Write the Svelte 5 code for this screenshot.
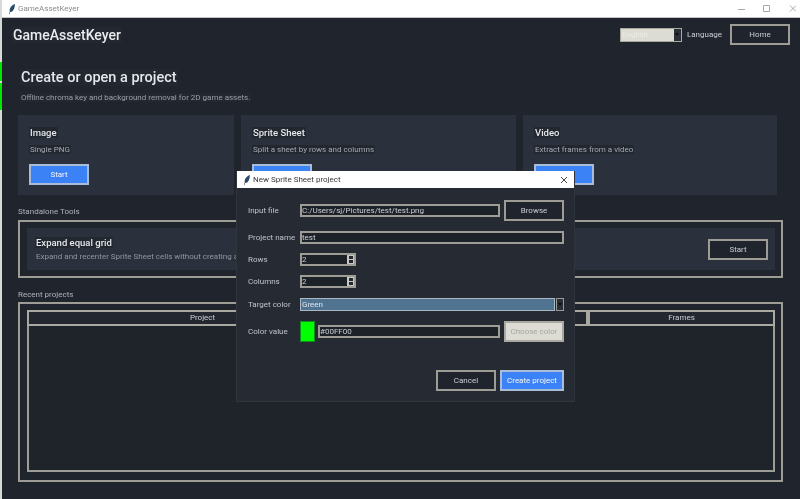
<script>
  const cards = [
    { title: 'Image', text: 'Single PNG' },
    { title: 'Sprite Sheet', text: 'Split a sheet by rows and columns' },
    { title: 'Video', text: 'Extract frames from a video' }
  ];
</script>

<div class="screen">
  <div class="strip">
    <div class="green"></div>
    <div class="green two"></div>
  </div>
  <div class="window">
    <div class="titlebar">
      <svg class="feather" viewBox="0 0 10 14" width="8" height="12"><path d="M8.8.6C5.6 1.4 2.9 4 2.2 7.4c-.2 1-.2 2 0 2.9L1 13.2l.7.3 1.1-2.6c2.6-.3 4.6-2.8 5.2-5.6.3-1.6.6-3.3.8-4.7z" fill="#2b4a6b"/></svg>
      <span class="wintitle">GameAssetKeyer</span>
      <div class="controls">
        <svg viewBox="0 0 58 10" width="58" height="10" fill="none" stroke="#a8a8a8" stroke-width="1">
          <path d="M0 5.5h7M25.5 1.5h6v6h-6zM52 1.5l6 6M58 1.5l-6 6"/>
        </svg>
      </div>
    </div>

    <div class="topbar">
      <span class="brand"><span>GameAssetKeyer</span></span>
      <div class="combo"><span class="combotext">English</span><span class="arrow"><i></i></span></div>
      <span class="lang">Language</span>
      <button class="btn home">Home</button>
    </div>

    <div class="content">
      <div class="h1"><span>Create or open a project</span></div>
      <div class="sub"><span>Offline chroma key and background removal for 2D game assets.</span></div>

      <div class="cards">
        {#each cards as c}
          <div class="card">
            <div class="ctitle"><span>{c.title}</span></div>
            <div class="ctext"><span>{c.text}</span></div>
            <button class="btn primary">Start</button>
          </div>
        {/each}
      </div>

      <div class="section">Standalone Tools</div>
      <div class="frame tools">
        <div class="tool">
          <div class="toolinfo">
            <div class="ttitle"><span>Expand equal grid</span></div>
            <div class="ttext">Expand and recenter Sprite Sheet cells without creating a c</div>
          </div>
          <button class="btn">Start</button>
        </div>
      </div>

      <div class="section recent">Recent projects</div>
      <div class="frame projects">
        <div class="table">
          <div class="thead">
            <div class="th c1">Project</div>
            <div class="th c2"></div>
            <div class="th c3">Frames</div>
          </div>
        </div>
      </div>
    </div>
  </div>

  <div class="dialog">
    <div class="dtitle">
      <svg class="feather" viewBox="0 0 10 14" width="8" height="12"><path d="M8.8.6C5.6 1.4 2.9 4 2.2 7.4c-.2 1-.2 2 0 2.9L1 13.2l.7.3 1.1-2.6c2.6-.3 4.6-2.8 5.2-5.6.3-1.6.6-3.3.8-4.7z" fill="#2b4a6b"/></svg>
      <span class="dname">New Sprite Sheet project</span>
      <svg class="dclose" viewBox="0 0 8 8" width="8" height="8" fill="none" stroke="#444" stroke-width="1"><path d="M1 1l6 6M7 1l-6 6"/></svg>
    </div>
    <div class="dbody">
      <div class="row r-file">
        <span class="lbl">Input file</span>
        <div class="entry grow">C:/Users/sj/Pictures/test/test.png</div>
        <button class="btn">Browse</button>
      </div>
      <div class="row r-name">
        <span class="lbl">Project name</span>
        <div class="entry grow">test</div>
      </div>
      <div class="row r-rows">
        <span class="lbl">Rows</span>
        <div class="entry spin">2<span class="spinbtn"><i class="up"></i><i class="down"></i></span></div>
      </div>
      <div class="row r-cols">
        <span class="lbl">Columns</span>
        <div class="entry spin">2<span class="spinbtn"><i class="up"></i><i class="down"></i></span></div>
      </div>
      <div class="row r-target">
        <span class="lbl">Target color</span>
        <div class="select"><div class="seltext">Green</div><span class="arrow"><i></i></span></div>
      </div>
      <div class="row r-value">
        <span class="lbl">Color value</span>
        <div class="swatch"></div>
        <div class="entry grow">#00FF00</div>
        <button class="btn disabled">Choose color</button>
      </div>
      <div class="actions">
        <button class="btn">Cancel</button>
        <button class="btn primary wide">Create project</button>
      </div>
    </div>
  </div>
</div>

<style>
  :global(body) { margin: 0; background: #20242c; }
  .screen {
    position: relative;
    display: flex;
    width: 800px;
    height: 499px;
    overflow: hidden;
    font-family: Roboto, "Noto Sans", sans-serif;
    font-size: 8px;
    color: #c9cdd4;
    white-space: nowrap;
    filter: blur(0.4px);
  }
  .strip { width: 2px; background: #d8d8d8; padding-top: 62px; flex: none; }
  .green { height: 19px; background: #00e800; }
  .green.two { height: 27px; margin-top: 2px; }
  .window { flex: 1; display: flex; flex-direction: column; background: #20242c; min-width: 0; }

  .titlebar {
    height: 17px;
    flex: none;
    background: #fff;
    border-bottom: 1px solid #c4c4c4;
    display: flex;
    align-items: center;
    padding-left: 6px;
    gap: 2px;
  }
  .wintitle { color: #8c8c8c; font-size: 8px; }
  .controls { margin-left: auto; margin-right: 4px; display: flex; }

  .topbar {
    height: 27px;
    padding: 3px 10px 0 10px;
    display: flex;
    align-items: center;
  }
  .brand { font-size: 14px; font-weight: 500; color: #e9ebef; margin-right: auto; }
  .brand span { background: #23272f; padding: 0 1px; }
  .combo {
    width: 62px;
    height: 14px;
    box-sizing: border-box;
    background: #dcdbd4;
    border: 1px solid #a9a89f;
    display: flex;
    justify-content: space-between;
  }
  .combotext { color: #ecebe6; font-size: 8px; line-height: 11px; padding-left: 1px; }
  .arrow {
    width: 7px;
    background: #2a2e36;
    display: flex;
    align-items: center;
    justify-content: center;
    flex: none;
  }
  .arrow i { border: 2.5px solid transparent; border-top: 3px solid #0c0c0c; border-bottom: 0; }
  .lang { margin: 0 8px 0 5px; color: #c9cdd4; font-size: 8px; }

  .btn {
    width: 60px;
    height: 21px;
    box-sizing: border-box;
    background: #20242c;
    color: #c9cdd4;
    border: 2px solid #9d9d96;
    font: inherit;
    padding: 0;
    flex: none;
  }
  .btn.primary { background: #3b82f6; color: #f3f6fb; border-color: #a8bcd8; }
  .btn.wide { width: 64px; }
  .btn.disabled { background: #dcdbd4; color: #a8a8a2; border-color: #a9a9a2; }

  .content { padding: 0 17px 0 16px; display: flex; flex-direction: column; flex: 1; min-height: 0; }
  .h1 { margin: 20px 0 0 2px; font-size: 14.5px; line-height: 20px; font-weight: 500; color: #e4e7ec; }
  .sub { margin: 3px 0 0 2px; font-size: 8px; line-height: 13px; color: #98a0ab; }
  .sub span, .h1 span, .ctitle span, .ctext span, .ttitle span { background: #23272f; padding: 0 1px; }

  .cards { display: flex; gap: 7px; margin-top: 11px; padding-right: 6px; }
  .card { background: #2b313c; height: 80px; box-sizing: border-box; padding: 11px 0 0 11px; flex: none; }
  .card:nth-child(1) { width: 216px; }
  .card:nth-child(2) { width: 275px; }
  .card:nth-child(3) { width: 254px; }
  .ctitle { font-size: 9.5px; line-height: 14px; font-weight: 500; color: #e4e7ec; }
  .ctext { margin-top: 3px; line-height: 13px; color: #a3a9b3; }
  .card .btn { margin-top: 8px; display: block; }

  .section { margin-top: 6px; line-height: 12px; color: #aeb3bb; padding-top: 5px; height: 12px; }
  .section.recent { margin-top: 6px; }
  .frame { border: 2px solid #9d9d96; box-sizing: border-box; margin-top: 2px; padding: 6px 6px 6px 7px; }
  .recent + .frame { margin-top: 1px; }
  .tools { height: 58px; }
  .tool {
    height: 42px;
    background: #2b313c;
    display: flex;
    align-items: center;
    justify-content: space-between;
    padding: 0 7px 0 8px;
  }
  .ttitle { font-size: 9.5px; line-height: 14px; font-weight: 500; color: #e4e7ec; }
  .ttext { line-height: 13px; color: #8f96a1; padding-left: 1px; }
  .projects { height: 180px; padding-bottom: 8px; }
  .table { height: 100%; box-sizing: border-box; border: 2px solid #9d9d96; border-top: 0; background: #1f232a; }
  .thead { display: flex; height: 16px; margin: 0 -2px 0 -2px; }
  .th {
    box-sizing: border-box;
    border: 2px solid #a9a9a2;
    background: #23272f;
    text-align: center;
    line-height: 12px;
    color: #c9cdd4;
  }
  .c1 { width: 351px; }
  .c2 { width: 210px; }
  .c3 { flex: 1; }

  .dialog {
    position: absolute;
    left: 236px;
    top: 171px;
    width: 339px;
    height: 231px;
    background: #262a32;
    border: 1px solid #30353d;
    border-top: 0;
    box-sizing: border-box;
    display: flex;
    flex-direction: column;
  }
  .dtitle {
    height: 17px;
    flex: none;
    background: #fff;
    display: flex;
    align-items: center;
    padding: 0 6px 0 6px;
    gap: 2px;
    color: #333;
  }
  .dname { font-size: 8px; color: #3a3a3a; }
  .dclose { margin-left: auto; }
  .dbody { padding: 12px 10px 0 11px; display: flex; flex-direction: column; flex: 1; }
  .row { display: flex; align-items: center; }
  .lbl { width: 52px; flex: none; color: #bfc3ca; }
  .entry {
    height: 13px;
    box-sizing: border-box;
    background: #1d2128;
    border: 2px solid #9d9d96;
    line-height: 9px;
    padding-left: 0;
    color: #c9cdd4;
  }
  .grow { flex: 1; min-width: 0; margin-right: 4px; }
  .r-file { height: 21px; }
  .r-name { height: 13px; margin-top: 10px; }
  .r-name .grow { margin-right: 0; }
  .r-rows { height: 13px; margin-top: 9px; }
  .r-cols { height: 13px; margin-top: 9px; }
  .r-target { height: 13px; margin-top: 10px; }
  .r-value { height: 21px; margin-top: 10px; }
  .spin { width: 56px; position: relative; }
  .spinbtn {
    position: absolute;
    right: 0;
    top: 0;
    bottom: 0;
    width: 7px;
    background: #c9c8c1;
    display: flex;
    flex-direction: column;
    align-items: center;
    justify-content: space-around;
  }
  .spinbtn i { width: 4px; height: 3px; background: #23272f; }
  .select {
    flex: 1;
    height: 13px;
    display: flex;
    gap: 1px;
  }
  .seltext {
    flex: 1;
    box-sizing: border-box;
    background: #4f7390;
    border: 1px solid #a9b9c4;
    color: #e0e6ec;
    line-height: 11px;
    padding-left: 1px;
  }
  .select .arrow { border: 1px solid #9a9a94; box-sizing: border-box; width: 8px; }
  .swatch { width: 15px; height: 21px; box-sizing: border-box; background: #00ff00; border: 1px solid #0f8f1f; flex: none; margin-right: 3px; }
  .actions { display: flex; justify-content: flex-end; gap: 4px; margin-top: 28px; }
</style>
